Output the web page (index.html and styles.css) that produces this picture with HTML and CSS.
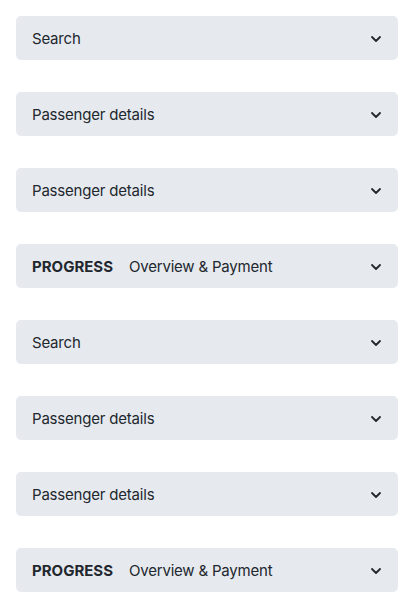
FILE: index.html
```html
<!DOCTYPE html>
<html lang="en">
<head>
<meta charset="utf-8">
<title>Accordions</title>
<link rel="stylesheet" href="styles.css">
</head>
<body>
<div class="list">
  <div class="bar"><span class="label">Search</span><svg class="chev" viewBox="0 0 20 20"><path d="M6 8l4 4 4-4"/></svg></div>
  <div class="bar"><span class="label">Passenger details</span><svg class="chev" viewBox="0 0 20 20"><path d="M6 8l4 4 4-4"/></svg></div>
  <div class="bar"><span class="label">Passenger details</span><svg class="chev" viewBox="0 0 20 20"><path d="M6 8l4 4 4-4"/></svg></div>
  <div class="bar"><span class="label"><strong class="step">PROGRESS</strong>Overview &amp; Payment</span><svg class="chev" viewBox="0 0 20 20"><path d="M6 8l4 4 4-4"/></svg></div>
  <div class="bar"><span class="label">Search</span><svg class="chev" viewBox="0 0 20 20"><path d="M6 8l4 4 4-4"/></svg></div>
  <div class="bar"><span class="label">Passenger details</span><svg class="chev" viewBox="0 0 20 20"><path d="M6 8l4 4 4-4"/></svg></div>
  <div class="bar"><span class="label">Passenger details</span><svg class="chev" viewBox="0 0 20 20"><path d="M6 8l4 4 4-4"/></svg></div>
  <div class="bar"><span class="label"><strong class="step">PROGRESS</strong>Overview &amp; Payment</span><svg class="chev" viewBox="0 0 20 20"><path d="M6 8l4 4 4-4"/></svg></div>
</div>
</body>
</html>
```
FILE: styles.css
```css
html, body {
  margin: 0;
  padding: 0;
  background: #ffffff;
}
body {
  font-family: Inter, "Noto Sans", sans-serif;
  color: #22272e;
}
.list {
  display: flex;
  flex-direction: column;
  gap: 32px;
  padding: 16px;
}
.bar {
  height: 44px;
  box-sizing: border-box;
  background: #e6eaee;
  border-radius: 5px;
  display: flex;
  align-items: center;
  justify-content: space-between;
  padding: 2px 12px 0 16px;
}
.label {
  font-size: 15px;
  line-height: 20px;
  letter-spacing: -0.2px;
}
.step {
  font-weight: 700;
  letter-spacing: 0;
  margin-right: 16px;
}
.chev {
  width: 20px;
  height: 20px;
  fill: none;
  stroke: #22272e;
  stroke-width: 1.8;
  stroke-linecap: round;
  stroke-linejoin: round;
}
```
